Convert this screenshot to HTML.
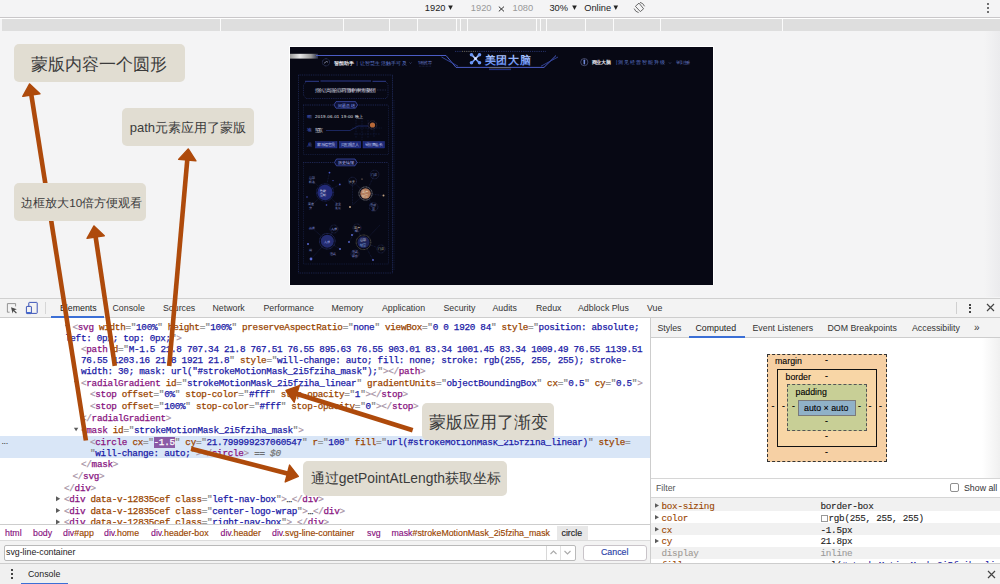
<!DOCTYPE html>
<html><head><meta charset="utf-8">
<style>
*{margin:0;padding:0;box-sizing:border-box}
html,body{width:1000px;height:584px;overflow:hidden;background:#f4f4f5;font-family:"Liberation Sans",sans-serif;position:relative}
.a{position:absolute;white-space:pre}
/* top bar */
#tb{font-size:9.2px;color:#222;}
.mq{position:absolute;top:19px;height:12px;background:#dedede}
.mqd{position:absolute;top:19px;height:12px;width:1px;background:#fbfbfb}
/* preview */
#pv{position:absolute;left:289px;top:46px;width:425px;height:239px;border:1px solid #fff;background:#070814;overflow:hidden}
/* labels */
.lb{position:absolute;background:#e1ddd2;border-radius:5px;color:#3b3b3b;white-space:pre;z-index:40}
/* devtools */
#dt{position:absolute;left:0;top:297px;width:1000px;height:287px;background:#fff}
.mono{font-family:"Liberation Mono",monospace;font-size:9.3px;letter-spacing:-0.283px;color:#303942;-webkit-text-stroke:0.25px currentColor}
.t{color:#a894a6}.n{color:#881280}.an{color:#994500}.av{color:#1a1aa6}.q{color:#8a8a8a}
.cl{position:absolute;white-space:pre;line-height:11px}
.sel{background:#8b5ba6;color:#fff}
.tri{font-size:6px;color:#666;line-height:11px}
.bc{font-size:8.8px;white-space:pre;-webkit-text-stroke:0.15px currentColor}
.bm{font-size:8.8px;color:#000;white-space:pre;line-height:10px;-webkit-text-stroke:0.1px #000}
.tab{position:absolute;font-size:8.8px;color:#333;white-space:pre}
</style></head><body>

<!-- TOP TOOLBAR -->
<div id="tb"><svg class="a" style="left:0;top:0" width="1000" height="16" viewBox="0 0 1000 16" fill="#222"><path d="M448.2 5.6H452.8L450.5 10Z"/><path d="M572.2 5.6H576.8L574.5 10Z"/><path d="M613.5 5.6H618.1L615.8 10Z"/></svg>
 <div class="a" style="left:424.8px;top:2.8px;font-size:9.3px;color:#222">1920</div>
 
 <div class="a" style="left:470.8px;top:2.8px;font-size:9.3px;color:#999">1920</div>
 <svg class="a" style="left:498px;top:6px" width="7" height="6" viewBox="0 0 7 6"><path d="M0.8 0.6L6 5.4M6 0.6L0.8 5.4" stroke="#333" stroke-width="1"/></svg>
 <div class="a" style="left:512.5px;top:2.8px;font-size:9.3px;color:#999">1080</div>
 <div class="a" style="left:549.4px;top:2.8px;font-size:9.3px;color:#222">30%</div>
 
 <div class="a" style="left:584.2px;top:2.8px;font-size:9.3px;color:#222">Online</div>
 
 <svg class="a" style="left:628px;top:0px" width="24" height="16" viewBox="628 0 24 16"><g fill="none" stroke="#5a5a5a" stroke-width="0.9"><path d="M635.4 6.3L639 3.1L643.6 8.8L640.3 11.6Z" stroke-linejoin="round"/><path d="M640 2.4Q643 2.8 644.6 6.3"/><path d="M634.2 8.6Q635.2 11.8 638.6 12.6"/></g></svg>
 <div class="a" style="left:987px;top:3px;width:2px;height:2px;background:#444;border-radius:1px"></div>
 <div class="a" style="left:987px;top:7px;width:2px;height:2px;background:#444;border-radius:1px"></div>
 <div class="a" style="left:987px;top:11px;width:2px;height:2px;background:#444;border-radius:1px"></div>
</div>
<div class="a" style="left:0;top:17px;width:1000px;height:1px;background:#c9c7c9"></div>
<div class="a" style="left:0;top:18px;width:1000px;height:1px;background:#fff"></div>
<div class="mq" style="left:1.5px;width:998.5px"></div>
<div class="mqd" style="left:220px"></div><div class="mqd" style="left:343px"></div><div class="mqd" style="left:389px"></div>
<div class="mqd" style="left:417px"></div><div class="mqd" style="left:456px"></div><div class="mqd" style="left:460px"></div>
<div class="mqd" style="left:467px"></div><div class="mqd" style="left:536px"></div><div class="mqd" style="left:540px"></div>
<div class="mqd" style="left:546px"></div><div class="mqd" style="left:585px"></div><div class="mqd" style="left:613px"></div>
<div class="mqd" style="left:660px"></div><div class="mqd" style="left:782px"></div>

<div class="a" style="left:984px;top:31px;width:16px;height:266px;background:linear-gradient(90deg,rgba(236,236,238,0),#ebebed)"></div>
<!-- PREVIEW -->
<div id="pv"></div>
<svg class="a" style="left:290px;top:47px" width="423" height="238" viewBox="290 47 423 238">
<defs>
<linearGradient id="glow" x1="0" x2="1" y1="0" y2="0"><stop offset="0" stop-color="#9a9a9a"/><stop offset="0.35" stop-color="#e8e8e8"/><stop offset="0.75" stop-color="#9a9a9a"/><stop offset="1" stop-color="#2a2f48"/></linearGradient>
<linearGradient id="fade" x1="0" x2="1"><stop offset="0" stop-color="#4a5cc0"/><stop offset="0.85" stop-color="#3a4aa0"/><stop offset="1" stop-color="#070814"/></linearGradient>
<linearGradient id="logo" x1="0" x2="0" y1="0" y2="1"><stop offset="0" stop-color="#b8d0ff"/><stop offset="1" stop-color="#5a86f0"/></linearGradient>
</defs>
<rect x="290" y="47" width="423" height="238" fill="#070814"/>
<!-- header lines -->
<rect x="290" y="53.8" width="28" height="4.8" fill="url(#glow)"/>
<path d="M316 55.5H446L456 67.4H544L556 55.5" fill="none" stroke="#4b5cc4" stroke-width="1"/><path d="M556 55.5H710" fill="none" stroke="url(#fade)" stroke-width="0.9"/>
<path d="M441.5 57L458 66.2M541 66.2L558 57" fill="none" stroke="#3446a0" stroke-width="0.9"/>
<path d="M455 51.4H546" fill="none" stroke="#2e3d80" stroke-width="0.8" stroke-dasharray="1.2 1"/>
<path d="M462 51.4H476" fill="none" stroke="#7a7040" stroke-width="0.8" stroke-dasharray="1 1.2"/>
<path d="M489 67.8H511" stroke="#807a60" stroke-width="0.8"/>
<path d="M489 69.6H511" stroke="#2a3ca8" stroke-width="0.8"/>
<!-- logo -->
<g stroke="url(#logo)" stroke-width="1.8" stroke-linecap="round"><path d="M471.5 54.5L479.5 63M479.5 54.5L471.5 63"/></g>
<g fill="#6a96f8"><circle cx="471.5" cy="54.7" r="1.8"/><circle cx="479.5" cy="54.7" r="1.8"/><circle cx="471.5" cy="62.8" r="1.8"/><circle cx="479.5" cy="62.8" r="1.8"/></g>
<circle cx="475.5" cy="58.7" r="1.4" fill="#e0e8ff"/>
<text x="484.5" y="63.6" font-size="11.4" fill="url(#logo)" font-family="Liberation Sans,sans-serif" font-weight="bold" textLength="46.5">美团大脑</text>
<!-- left nav -->
<circle cx="326" cy="62.3" r="3.6" fill="none" stroke="#5866a8" stroke-width="0.6" stroke-dasharray="0.8 0.6"/>
<path d="M324 63.3L326.5 61.5L328 62.2" stroke="#c0c8e8" stroke-width="0.6" fill="none"/>
<text x="334" y="64.6" font-size="5.2" fill="#e8e8f0" font-family="Liberation Sans,sans-serif" font-weight="bold" textLength="20">智能助手</text>
<text x="356.5" y="64.6" font-size="5" fill="#5f78d0" font-family="Liberation Sans,sans-serif" textLength="50">| 让智慧生活触手可及</text>
<path d="M409.5 62.5l1 1 1-1" stroke="#5a6aa8" stroke-width="0.5" fill="none"/>
<text x="417.8" y="64" font-size="3.8" fill="#6878c8" font-family="Liberation Sans,sans-serif" textLength="14">智能推荐</text>
<path d="M419 66.2H431" stroke="#303a70" stroke-width="0.5" stroke-dasharray="0.8 0.6"/>
<!-- right nav -->
<circle cx="584.3" cy="62.1" r="3.6" fill="none" stroke="#6a70a0" stroke-width="0.6"/>
<rect x="583.5" y="59.5" width="1.6" height="5" rx="0.8" fill="#6f88d8"/>
<text x="591.6" y="64.4" font-size="5.2" fill="#e8e8f0" font-family="Liberation Sans,sans-serif" font-weight="bold" textLength="19.5">商业大脑</text>
<text x="616" y="64.4" font-size="5" fill="#5f78d0" font-family="Liberation Sans,sans-serif" textLength="49">|洞见经营智能升级</text>
<path d="M669 62.5l1 1 1-1" stroke="#5a6aa8" stroke-width="0.5" fill="none"/>
<text x="675.5" y="64" font-size="3.8" fill="#7080d0" font-family="Liberation Sans,sans-serif" textLength="14.5">登录注册</text>
<!-- left panel frame -->
<g fill="none" stroke="#26346a" stroke-width="0.7" stroke-dasharray="0.9 0.9">
<rect x="298.5" y="75" width="94" height="198"/>
</g>
<g fill="none" stroke="#1c2750" stroke-width="0.6" stroke-dasharray="0.9 0.9"><path d="M392.5 75V273M394 100V270"/></g>
<!-- title box -->
<path d="M305 81.3H319M320.5 81H371M372.5 81.3H386" stroke="#34429a" stroke-width="0.9"/>
<path d="M306 82L303.5 85V95L306 98.5H386L388 96V84L386 82" fill="none" stroke="#2a3878" stroke-width="0.6" stroke-dasharray="0.9 0.9"/>
<text x="314.6" y="92.2" font-size="4.6" fill="#d8d8e0" font-family="Liberation Sans,sans-serif" textLength="61.5">指令让高温会容易理解的事情感谢团</text>
<path d="M377 90H386" stroke="#3a4478" stroke-width="0.6" stroke-dasharray="0.8 0.8"/>
<!-- pill 1 -->
<path d="M303 105H334M357 105H388" stroke="#2c3a78" stroke-width="0.7" stroke-dasharray="0.9 0.9"/>
<path d="M336 101.6H355.5L357.5 104.9L355.5 108.2H336L334 104.9Z" fill="#0e1235" stroke="#4658c0" stroke-width="0.7"/>
<text x="337.5" y="106.8" font-size="4.4" fill="#8ea4ff" font-family="Liberation Sans,sans-serif" textLength="17">问题总结</text>
<path d="M303.5 105V154.5H388.5V105" fill="none" stroke="#1f2a58" stroke-width="0.6" stroke-dasharray="0.9 0.9"/>
<!-- rows -->
<g font-family="Liberation Sans,sans-serif">
<text x="306.5" y="117.8" font-size="3.8" fill="#4a5ec0" textLength="5.5">时间</text>
<text x="315" y="118" font-size="4.4" fill="#e0e0e8" textLength="48">2019.06.01   19:00   晚上</text>
<text x="306.5" y="131.3" font-size="3.8" fill="#4a5ec0" textLength="5.5">地点</text>
<text x="315" y="131.5" font-size="4.6" fill="#e0e0e8" textLength="8">望京</text>
<text x="306.5" y="145.8" font-size="3.8" fill="#4a5ec0" textLength="5.5">人员</text>
</g>
<path d="M326 130.5H350L358 126H368" fill="none" stroke="#2a3a90" stroke-width="0.6"/>
<g fill="none" stroke="#223066" stroke-width="0.5" stroke-dasharray="0.7 0.9"><path d="M356 120V138M362 118V140M368 120V138M374 122V138M352 128H382M354 134H380"/></g>
<circle cx="372.5" cy="125" r="2.6" fill="#b86838"/>
<circle cx="372.5" cy="125" r="4.2" fill="none" stroke="#5a4a60" stroke-width="0.6" stroke-dasharray="0.8 0.6"/>
<g fill="#1c2878" stroke="#2e3ca0" stroke-width="0.4"><rect x="315.5" y="141.5" width="21.5" height="6.5"/><rect x="339.3" y="141.5" width="21.5" height="6.5"/><rect x="363" y="141.5" width="21.5" height="6.5"/></g>
<g font-family="Liberation Sans,sans-serif" font-size="3.8" fill="#c8d0f0"><text x="317" y="146.2" textLength="18">家乐福官员</text><text x="340.8" y="146.2" textLength="18">周五跟进人</text><text x="364.5" y="146.2" textLength="18">望京商会长</text></g>
<!-- pill 2 -->
<path d="M303 162.5H334M357 162.5H388" stroke="#2c3a78" stroke-width="0.7" stroke-dasharray="0.9 0.9"/>
<path d="M336.5 159H355L357 162.4L355 165.8H336.5L334.5 162.4Z" fill="#0e1235" stroke="#4658c0" stroke-width="0.7"/>
<text x="338" y="164.2" font-size="4.4" fill="#c0c8ff" font-family="Liberation Sans,sans-serif" textLength="16">历史情报</text>
<path d="M303.5 162.5V264H388.5V162.5" fill="none" stroke="#1f2a58" stroke-width="0.6" stroke-dasharray="0.9 0.9"/>
<!-- node graph 1 -->
<g fill="none" stroke="#26336a" stroke-width="0.45" stroke-dasharray="0.8 0.8">
<path d="M312 180L325 192.5L329.5 172.6M325 192.5L340 184.4M325 192.5L312 205M325 192.5L338 205M365.5 193.5L352.5 181.2M365.5 193.5L374.6 174.5M365.5 193.5L373.6 206.9M365.5 193.5L383.5 195.5M352.5 181.2V205M365.5 193.5L352.5 205"/>
<path d="M327.3 241.2L312 228M327.3 241.2L334 229M327.3 241.2L311 259M327.3 241.2L340 249M363.5 242.3L357 228M363.5 242.3L381 249M363.5 242.3L355 254M363.5 242.3L373 260M363.5 242.3L380 225M349 242L357 228"/>
</g>
<circle cx="325" cy="192.5" r="7.7" fill="#222a78"/>
<circle cx="325" cy="192.5" r="8.6" fill="none" stroke="#3040a0" stroke-width="0.6" stroke-dasharray="0.8 0.6"/>
<circle cx="365.5" cy="193.5" r="5.2" fill="#b07a5c"/>
<circle cx="365.5" cy="193.5" r="6.6" fill="none" stroke="#7a7a80" stroke-width="1" stroke-dasharray="1 0.5"/>
<g fill="none" stroke="#3a4680" stroke-width="0.5" stroke-dasharray="0.8 0.6"><circle cx="352.5" cy="181.2" r="4"/><circle cx="374.6" cy="174.5" r="4.3"/><circle cx="373.6" cy="206.9" r="4.3"/><circle cx="334" cy="229" r="4"/><circle cx="357" cy="228" r="4"/><circle cx="355" cy="254" r="4"/><circle cx="381" cy="249" r="4"/></g>
<g font-family="Liberation Sans,sans-serif" font-size="3.4" fill="#9aa6e0">
<text x="308.5" y="178.5">总部</text><text x="308.5" y="182.5">机会</text>
<text x="320" y="191.5" fill="#e8e8f8">智能</text><text x="320" y="196" fill="#e8e8f8">营销</text>
<text x="308" y="204.5">渠道</text><text x="309" y="208.5">分</text>
<text x="335" y="204.5">企业</text><text x="335" y="208.5">发展</text>
<text x="349" y="182.5" fill="#c0c0c8">外卖</text><text x="371" y="176">门店</text>
<text x="361.5" y="192.5" fill="#f0e0d0">商户</text><text x="361.5" y="196.8" fill="#f0e0d0">经营</text>
<text x="370" y="206">活动</text><text x="372" y="210">宣</text>
</g>
<g fill="#4858c8"><circle cx="329.5" cy="172.6" r="0.9"/><circle cx="333" cy="180.6" r="0.7"/><circle cx="339.8" cy="184.4" r="0.9"/><circle cx="307" cy="197" r="0.7"/><circle cx="326.5" cy="205" r="0.8"/></g>
<g fill="#c0a080"><circle cx="383.5" cy="195.5" r="1"/><circle cx="350" cy="207" r="1"/><circle cx="362" cy="179" r="0.6"/></g>
<!-- node graph 2 -->
<circle cx="327.3" cy="241.2" r="6.5" fill="#242c70"/>
<circle cx="327.3" cy="241.2" r="7.8" fill="none" stroke="#364490" stroke-width="0.7" stroke-dasharray="0.8 0.6"/>
<circle cx="363.5" cy="242.3" r="6" fill="#1e2458"/>
<circle cx="363.5" cy="242.3" r="7.3" fill="none" stroke="#807860" stroke-width="0.7" stroke-dasharray="0.8 0.6"/>
<g font-family="Liberation Sans,sans-serif" font-size="3.4" fill="#aab4f0">
<text x="309" y="229" fill="#8090e0">品类</text><text x="331" y="230">人群</text>
<text x="324" y="243">人群</text>
<text x="308.5" y="250.5">用</text><text x="330" y="255">活跃</text>
<text x="353.5" y="228.5" fill="#e0d8c0">商户</text><text x="355" y="232">型</text>
<text x="359.5" y="241" fill="#f0f0f8">总部</text><text x="359.5" y="245.5" fill="#a0d0ff">经营</text>
<text x="377.5" y="250" fill="#c8c0a0">门店</text>
<text x="352" y="253">活跃</text><text x="352" y="257">评价</text>
</g>
<g fill="#5868d0"><circle cx="308" cy="244" r="1"/><circle cx="311" cy="259" r="1.4"/><circle cx="340" cy="249" r="1"/><circle cx="352" cy="235" r="1"/><circle cx="349" cy="242" r="0.9"/><circle cx="373" cy="260" r="0.9"/></g>
</svg>


<!-- DEVTOOLS -->
<!-- devtools main toolbar -->
<div class="a" style="left:0;top:297.6px;width:1000px;height:1px;background:#d0d0d0"></div>
<div class="a" style="left:0;top:298.6px;width:1000px;height:18.9px;background:#f3f3f3"></div>
<div class="a" style="left:0;top:317px;width:1000px;height:1px;background:#cdcdcd"></div>
<div class="a" style="left:51px;top:316px;width:53px;height:2px;background:#3b6fd6"></div>
<!-- inspect icon -->
<svg class="a" style="left:0;top:296px" width="50" height="24" viewBox="0 296 50 24"><path d="M9.6 312.2H7.4V303.6H15.6V306.4" fill="none" stroke="#8a8a8a" stroke-width="0.9"/><path d="M11 307.3L16.8 309.2L14.3 310.2L16.9 312.7L16 313.6L13.4 311.1L12.6 313.5Z" fill="#4a4a4a"/>
<rect x="28.8" y="302.4" width="8.4" height="11" rx="0.6" fill="none" stroke="#3d55b8" stroke-width="1"/><rect x="26.4" y="306.4" width="5" height="7.2" rx="0.5" fill="#f3f3f3" stroke="#3d55b8" stroke-width="1"/><rect x="26.9" y="312" width="4" height="1.2" fill="#3d6ad8"/></svg>
<div class="a" style="left:45px;top:302px;width:1px;height:12px;background:#d6d6d6"></div>
<div class="tab" style="left:60px;top:303px;color:#222">Elements</div>
<div class="tab" style="left:112.5px;top:303px">Console</div>
<div class="tab" style="left:163px;top:303px">Sources</div>
<div class="tab" style="left:212.5px;top:303px">Network</div>
<div class="tab" style="left:263.5px;top:303px">Performance</div>
<div class="tab" style="left:331.5px;top:303px">Memory</div>
<div class="tab" style="left:382px;top:303px">Application</div>
<div class="tab" style="left:443.5px;top:303px">Security</div>
<div class="tab" style="left:492.5px;top:303px">Audits</div>
<div class="tab" style="left:536px;top:303px">Redux</div>
<div class="tab" style="left:578px;top:303px">Adblock Plus</div>
<div class="tab" style="left:647px;top:303px">Vue</div>
<div class="a" style="left:956px;top:302px;width:1px;height:12px;background:#d0d0d0"></div>
<div class="a" style="left:969px;top:303.5px;width:2px;height:2px;background:#444"></div>
<div class="a" style="left:969px;top:307px;width:2px;height:2px;background:#444"></div>
<div class="a" style="left:969px;top:310.5px;width:2px;height:2px;background:#444"></div>
<svg class="a" style="left:986px;top:303px" width="9" height="9" viewBox="0 0 9 9"><path d="M1 1L8 8M8 1L1 8" stroke="#444" stroke-width="1.2"/></svg>

<!-- code pane -->
<div class="a" style="left:0;top:318px;width:650px;height:206.5px;background:#fff;overflow:hidden" id="codepane"></div>
<div class="a" style="left:0;top:435.8px;width:650px;height:22.4px;background:#d9e6f7"></div>
<div class="cl" style="left:1.5px;top:435.5px;font-size:9px;color:#333;letter-spacing:-0.4px">...</div>
<div class="cl mono" style="left:72.5px;top:321.75px"><span class="t">&lt;</span><span class="n">svg</span> <span class="an">width</span><span class="q">="</span><span class="av">100%</span><span class="q">"</span> <span class="an">height</span><span class="q">="</span><span class="av">100%</span><span class="q">"</span> <span class="an">preserveAspectRatio</span><span class="q">="</span><span class="av">none</span><span class="q">"</span> <span class="an">viewBox</span><span class="q">="</span><span class="av">0 0 1920 84</span><span class="q">"</span> <span class="an">style</span><span class="q">="</span><span class="av">position: absolute;</span></div>

<div class="cl mono" style="left:65.0px;top:332.75px"><span class="av">left: 0px; top: 0px;</span><span class="q">"</span><span class="t">&gt;</span></div>
<div class="cl mono" style="left:81.0px;top:343.95px"><span class="t">&lt;</span><span class="n">path</span> <span class="an">d</span><span class="q">="</span><span class="av">M-1.5 21.8 707.34 21.8 767.51 76.55 895.63 76.55 903.01 83.34 1001.45 83.34 1009.49 76.55 1139.51</span></div>
<div class="cl mono" style="left:81.0px;top:355.25px"><span class="av">76.55 1203.16 21.8 1921 21.8</span><span class="q">"</span> <span class="an">style</span><span class="q">="</span><span class="av">will-change: auto; fill: none; stroke: rgb(255, 255, 255); stroke-</span></div>
<div class="cl mono" style="left:81.0px;top:366.45px"><span class="av">width: 30; mask: url(&quot;#strokeMotionMask_2i5fziha_mask&quot;);</span><span class="q">"</span><span class="t">&gt;&lt;/</span><span class="n">path</span><span class="t">&gt;</span></div>
<div class="cl mono" style="left:81.0px;top:377.95px"><span class="t">&lt;</span><span class="n">radialGradient</span> <span class="an">id</span><span class="q">="</span><span class="av">strokeMotionMask_2i5fziha_linear</span><span class="q">"</span> <span class="an">gradientUnits</span><span class="q">="</span><span class="av">objectBoundingBox</span><span class="q">"</span> <span class="an">cx</span><span class="q">="</span><span class="av">0.5</span><span class="q">"</span> <span class="an">cy</span><span class="q">="</span><span class="av">0.5</span><span class="q">"</span><span class="t">&gt;</span></div>

<div class="cl mono" style="left:90.0px;top:389.25px"><span class="t">&lt;</span><span class="n">stop</span> <span class="an">offset</span><span class="q">="</span><span class="av">0%</span><span class="q">"</span> <span class="an">stop-color</span><span class="q">="</span><span class="av">#fff</span><span class="q">"</span> <span class="an">stop-opacity</span><span class="q">="</span><span class="av">1</span><span class="q">"</span><span class="t">&gt;&lt;/</span><span class="n">stop</span><span class="t">&gt;</span></div>
<div class="cl mono" style="left:90.0px;top:400.95px"><span class="t">&lt;</span><span class="n">stop</span> <span class="an">offset</span><span class="q">="</span><span class="av">100%</span><span class="q">"</span> <span class="an">stop-color</span><span class="q">="</span><span class="av">#fff</span><span class="q">"</span> <span class="an">stop-opacity</span><span class="q">="</span><span class="av">0</span><span class="q">"</span><span class="t">&gt;&lt;/</span><span class="n">stop</span><span class="t">&gt;</span></div>
<div class="cl mono" style="left:81.0px;top:413.05px"><span class="t">&lt;/</span><span class="n">radialGradient</span><span class="t">&gt;</span></div>
<div class="cl mono" style="left:81.0px;top:424.85px"><span class="t">&lt;</span><span class="n">mask</span> <span class="an">id</span><span class="q">="</span><span class="av">strokeMotionMask_2i5fziha_mask</span><span class="q">"</span><span class="t">&gt;</span></div>

<div class="cl mono" style="left:90.0px;top:436.85px"><span class="t">&lt;</span><span class="n">circle</span> <span class="an">cx</span><span class="q">="</span><span class="sel">-1.5</span><span class="q">"</span> <span class="an">cy</span><span class="q">="</span><span class="av">21.799999237060547</span><span class="q">"</span> <span class="an">r</span><span class="q">="</span><span class="av">100</span><span class="q">"</span> <span class="an">fill</span><span class="q">="</span><span class="av">url(#strokeMotionMask_2i5fziha_linear)</span><span class="q">"</span> <span class="an">style</span><span class="q">=</span></div>
<div class="cl mono" style="left:90.0px;top:448.15px"><span class="q">"</span><span class="av">will-change: auto;</span><span class="q">"</span><span class="t">&gt;&lt;/</span><span class="n">circle</span><span class="t">&gt;</span> <span style="color:#555">== </span><span style="color:#777;font-style:italic">$0</span></div>
<div class="cl mono" style="left:81.0px;top:459.35px"><span class="t">&lt;/</span><span class="n">mask</span><span class="t">&gt;</span></div>
<div class="cl mono" style="left:72.5px;top:471.15px"><span class="t">&lt;/</span><span class="n">svg</span><span class="t">&gt;</span></div>
<div class="cl mono" style="left:64.0px;top:482.75px"><span class="t">&lt;/</span><span class="n">div</span><span class="t">&gt;</span></div>
<div class="cl mono" style="left:64.0px;top:494.25px"><span class="t">&lt;</span><span class="n">div</span> <span class="an">data-v-12835cef</span> <span class="an">class</span><span class="q">="</span><span class="av">left-nav-box</span><span class="q">"</span><span class="t">&gt;</span>…<span class="t">&lt;/</span><span class="n">div</span><span class="t">&gt;</span></div>

<div class="cl mono" style="left:64.0px;top:505.85px"><span class="t">&lt;</span><span class="n">div</span> <span class="an">data-v-12835cef</span> <span class="an">class</span><span class="q">="</span><span class="av">center-logo-wrap</span><span class="q">"</span><span class="t">&gt;</span>…<span class="t">&lt;/</span><span class="n">div</span><span class="t">&gt;</span></div>

<div class="cl mono" style="left:64.0px;top:517.35px"><span class="t">&lt;</span><span class="n">div</span> <span class="an">data-v-12835cef</span> <span class="an">class</span><span class="q">="</span><span class="av">right-nav-box</span><span class="q">"</span><span class="t">&gt;</span>…<span class="t">&lt;/</span><span class="n">div</span><span class="t">&gt;</span></div>


<svg class="a" style="left:0;top:0;z-index:5" width="1000" height="584" viewBox="0 0 1000 584" fill="#5c5c5c"><path d="M64.80 324.70L69.20 324.70L67.00 328.10Z"/><path d="M73.90 380.90L78.30 380.90L76.10 384.30Z"/><path d="M73.90 427.80L78.30 427.80L76.10 431.20Z"/><path d="M56.00 496.30L56.00 501.30L60.20 498.80Z"/><path d="M56.00 507.90L56.00 512.90L60.20 510.40Z"/><path d="M56.00 519.40L56.00 524.40L60.20 521.90Z"/><path d="M655.00 503.20L655.00 507.80L659.00 505.50Z"/><path d="M655.00 515.00L655.00 519.60L659.00 517.30Z"/><path d="M655.00 526.90L655.00 531.50L659.00 529.20Z"/><path d="M655.00 538.70L655.00 543.30L659.00 541.00Z"/></svg>
<!-- breadcrumbs -->
<div class="a" style="left:0;top:524px;width:650px;height:1px;background:#cdcdcd"></div>
<div class="a" style="left:0;top:525px;width:650px;height:15px;background:#fff"></div>
<div class="a" style="left:556.5px;top:525.5px;width:31px;height:14px;background:#e8e8e8"></div>
<div class="a bc" style="left:5px;top:527.5px"><span class="n">html</span></div>
<div class="a bc" style="left:33px;top:527.5px"><span class="n">body</span></div>
<div class="a bc" style="left:63px;top:527.5px"><span class="n">div</span><span class="an">#app</span></div>
<div class="a bc" style="left:104px;top:527.5px"><span class="n">div</span><span class="an">.home</span></div>
<div class="a bc" style="left:151px;top:527.5px"><span class="n">div</span><span class="an">.header-box</span></div>
<div class="a bc" style="left:220.5px;top:527.5px"><span class="n">div</span><span class="an">.header</span></div>
<div class="a bc" style="left:272px;top:527.5px"><span class="n">div</span><span class="an">.svg-line-container</span></div>
<div class="a bc" style="left:367px;top:527.5px"><span class="n">svg</span></div>
<div class="a bc" style="left:391.5px;top:527.5px"><span class="n">mask</span><span class="an">#strokeMotionMask_2i5fziha_mask</span></div>
<div class="a bc" style="left:561.5px;top:527.5px;color:#222">circle</div>

<!-- search bar -->
<div class="a" style="left:0;top:540px;width:650px;height:22.5px;background:#f3f3f3;border-top:1px solid #dcdcdc"></div>
<div class="a" style="left:3.5px;top:544.5px;width:572px;height:16px;background:#fff;border:1px solid #b9b9b9;border-radius:2px"></div>
<div class="a" style="left:6px;top:547px;font-size:8.8px;color:#222">svg-line-container</div>
<div class="a" style="left:545.5px;top:545.5px;width:1px;height:14px;background:#d8d8d8"></div>
<svg class="a" style="left:549px;top:548px" width="24" height="9" viewBox="0 0 24 9"><path d="M1.5 6L4.5 3L7.5 6" fill="none" stroke="#aaa" stroke-width="1.1"/><path d="M15.5 3L18.5 6L21.5 3" fill="none" stroke="#aaa" stroke-width="1.1"/></svg>
<div class="a" style="left:560px;top:545.5px;width:1px;height:14px;background:#e2e2e2"></div>
<div class="a" style="left:583px;top:544.5px;width:63.5px;height:16px;background:#fff;border:1px solid #c9c4c9;border-radius:3px"></div>
<div class="a" style="left:601px;top:547px;font-size:8.8px;color:#2a3fa8;-webkit-text-stroke:0.15px currentColor">Cancel</div>

<!-- right pane -->
<div class="a" style="left:650px;top:318px;width:350px;height:245px;background:#fff"></div>
<div class="a" style="left:650px;top:318px;width:1px;height:245px;background:#cdcdcd"></div>
<div class="a" style="left:651px;top:318px;width:349px;height:19px;background:#f3f3f3"></div>
<div class="a" style="left:651px;top:337px;width:349px;height:1px;background:#cdcdcd"></div>
<div class="a" style="left:688.5px;top:336px;width:56.5px;height:2px;background:#3b6fd6"></div>
<div class="tab" style="left:657.5px;top:322.7px">Styles</div>
<div class="tab" style="left:695.5px;top:322.7px;color:#222">Computed</div>
<div class="tab" style="left:752.5px;top:322.7px">Event Listeners</div>
<div class="tab" style="left:827.5px;top:322.7px">DOM Breakpoints</div>
<div class="tab" style="left:912px;top:322.7px">Accessibility</div>
<div class="tab" style="left:974px;top:321.7px;font-size:10px">&#187;</div>
<div class="a" style="left:982px;top:338px;width:18px;height:140px;background:linear-gradient(90deg,#fff,#f0f0f0)"></div>

<!-- box model -->
<div class="a" style="left:766.5px;top:353.5px;width:120.5px;height:108px;background:#f6d0a4;border:1px dashed #333"></div>
<div class="a" style="left:777px;top:369px;width:100px;height:77.5px;background:#f8d6a6;border:1px solid #111"></div>
<div class="a" style="left:787px;top:384px;width:79.5px;height:47px;background:#c8cf96;border:1px dashed #555"></div>
<div class="a" style="left:797.5px;top:400px;width:58.5px;height:16px;background:#90b1c8;border:1px solid #7a7a7a"></div>
<div class="a bm" style="left:775px;top:356.20px">margin</div>
<div class="a bm" style="left:785.5px;top:371.70px">border</div>
<div class="a bm" style="left:795.5px;top:386.70px">padding</div>
<div class="a bm" style="left:804px;top:402.70px">auto × auto</div>
<div class="a bm" style="left:825px;top:355.20px">-</div>
<div class="a bm" style="left:825px;top:370.70px">-</div>
<div class="a bm" style="left:825px;top:416.20px">-</div>
<div class="a bm" style="left:825px;top:431.20px">-</div>
<div class="a bm" style="left:825px;top:446.70px">-</div>
<div class="a bm" style="left:771.5px;top:401.20px">-</div>
<div class="a bm" style="left:782px;top:401.20px">-</div>
<div class="a bm" style="left:792px;top:401.20px">-</div>
<div class="a bm" style="left:858px;top:401.20px">-</div>
<div class="a bm" style="left:868.5px;top:401.20px">-</div>
<div class="a bm" style="left:879px;top:401.20px">-</div>

<!-- filter -->
<div class="a" style="left:651px;top:477.5px;width:349px;height:1px;background:#d6d6d6"></div>
<div class="a" style="left:651px;top:497px;width:349px;height:1px;background:#d6d6d6"></div>
<div class="a" style="left:656px;top:483px;font-size:8.8px;color:#555">Filter</div>
<div class="a" style="left:949.5px;top:482.5px;width:9.5px;height:9.5px;border:1px solid #8f8f8f;border-radius:2px;background:#fff"></div>
<div class="a" style="left:964px;top:483px;font-size:8.8px;color:#333">Show all</div>
<div class="a" style="left:651px;top:498px;width:349px;height:12.5px;background:#f1f1f1"></div>
<div class="a" style="left:651px;top:522.8px;width:349px;height:12px;background:#f1f1f1"></div>
<div class="a" style="left:651px;top:546.5px;width:349px;height:12px;background:#f1f1f1"></div>

<div class="cl mono" style="left:661.5px;top:500.65px;color:#994500;-webkit-text-stroke:0.1px currentColor">box-sizing</div>
<div class="cl mono" style="left:820.5px;top:500.65px;color:#222;-webkit-text-stroke:0.1px currentColor">border-box</div>

<div class="cl mono" style="left:661.5px;top:512.75px;color:#994500;-webkit-text-stroke:0.1px currentColor">color</div>
<div class="cl mono" style="left:820.5px;top:512.75px;color:#222;-webkit-text-stroke:0.1px currentColor"><span style="display:inline-block;width:7px;height:7px;border:1px solid #999;vertical-align:-1px;margin-right:1px;background:#fff"></span>rgb(255, 255, 255)</div>

<div class="cl mono" style="left:661.5px;top:524.65px;color:#994500;-webkit-text-stroke:0.1px currentColor">cx</div>
<div class="cl mono" style="left:820.5px;top:524.65px;color:#222;-webkit-text-stroke:0.1px currentColor">-1.5px</div>

<div class="cl mono" style="left:661.5px;top:536.45px;color:#994500;-webkit-text-stroke:0.1px currentColor">cy</div>
<div class="cl mono" style="left:820.5px;top:536.45px;color:#222;-webkit-text-stroke:0.1px currentColor">21.8px</div>
<div class="cl mono" style="left:661.5px;top:548.15px;color:#a09a94;-webkit-text-stroke:0.1px currentColor">display</div>
<div class="cl mono" style="left:820.5px;top:548.15px;color:#9a9a9a;-webkit-text-stroke:0.1px currentColor">inline</div>

<div class="cl mono" style="left:661.5px;top:559.85px;color:#994500;-webkit-text-stroke:0.1px currentColor">fill</div>
<div class="cl mono" style="left:820.5px;top:559.85px;color:#222;-webkit-text-stroke:0.1px currentColor">url(<span style="color:#1a1aa6">#strokeMotionMask_2i5fziha_li</span></div>

<!-- console drawer -->
<div class="a" style="left:0;top:562.5px;width:1000px;height:1px;background:#cdcdcd"></div>
<div class="a" style="left:0;top:563.5px;width:1000px;height:20.5px;background:#f0f0f0"></div>
<div class="a" style="left:11px;top:569px;width:2px;height:2px;background:#444"></div>
<div class="a" style="left:11px;top:573px;width:2px;height:2px;background:#444"></div>
<div class="a" style="left:11px;top:577px;width:2px;height:2px;background:#444"></div>
<div class="tab" style="left:28px;top:569px;color:#222">Console</div>
<div class="a" style="left:21px;top:582.5px;width:47px;height:2px;background:#3b6fd6"></div>
<svg class="a" style="left:986.5px;top:569.5px" width="9" height="9" viewBox="0 0 9 9"><path d="M1 1L8 8M8 1L1 8" stroke="#444" stroke-width="1.2"/></svg>



<div class="lb" style="left:14px;top:44.3px;width:170.5px;height:37.5px;font-size:17.2px;line-height:41px;padding-left:17.3px">蒙版内容一个圆形</div>
<div class="lb" style="left:122.2px;top:108.3px;width:131.5px;height:38.2px;font-size:13px;line-height:40.2px;padding-left:7.5px">path元素应用了蒙版</div>
<div class="lb" style="left:14.3px;top:183.2px;width:131.7px;height:37.5px;font-size:11.65px;line-height:40.5px;padding-left:7px">边框放大10倍方便观看</div>
<div class="lb" style="left:421.7px;top:403.2px;width:132.3px;height:36.5px;font-size:16.9px;line-height:39.3px;padding-left:7.6px">蒙版应用了渐变</div>
<div class="lb" style="left:303.4px;top:461.2px;width:203.3px;height:34.5px;font-size:13.85px;line-height:35.5px;padding-left:7.4px">通过getPointAtLength获取坐标</div>
<svg class="a" style="left:0;top:0;z-index:30" width="1000" height="584" viewBox="0 0 1000 584"><path d="M85.90 440.50L31.06 93.08" stroke="#ae4a0b" stroke-width="4.6" fill="none"/><path d="M29.61 83.89L39.96 93.70L22.78 96.41Z" fill="#ae4a0b" stroke="#ae4a0b" stroke-width="1.4" stroke-linejoin="round"/><path d="M114.80 365.80L95.37 235.09" stroke="#ae4a0b" stroke-width="4.6" fill="none"/><path d="M94.00 225.89L104.27 235.79L87.06 238.35Z" fill="#ae4a0b" stroke="#ae4a0b" stroke-width="1.4" stroke-linejoin="round"/><path d="M169.20 366.00L187.43 158.16" stroke="#ae4a0b" stroke-width="4.6" fill="none"/><path d="M188.24 148.90L195.92 160.91L178.58 159.39Z" fill="#ae4a0b" stroke="#ae4a0b" stroke-width="1.4" stroke-linejoin="round"/><path d="M412.70 430.30L294.84 393.30" stroke="#ae4a0b" stroke-width="4.6" fill="none"/><path d="M285.97 390.51L299.36 385.59L294.14 402.20Z" fill="#ae4a0b" stroke="#ae4a0b" stroke-width="1.4" stroke-linejoin="round"/><path d="M191.00 448.70L289.32 474.01" stroke="#ae4a0b" stroke-width="4.6" fill="none"/><path d="M298.32 476.33L285.21 481.93L289.55 465.08Z" fill="#ae4a0b" stroke="#ae4a0b" stroke-width="1.4" stroke-linejoin="round"/></svg>
</body></html>
